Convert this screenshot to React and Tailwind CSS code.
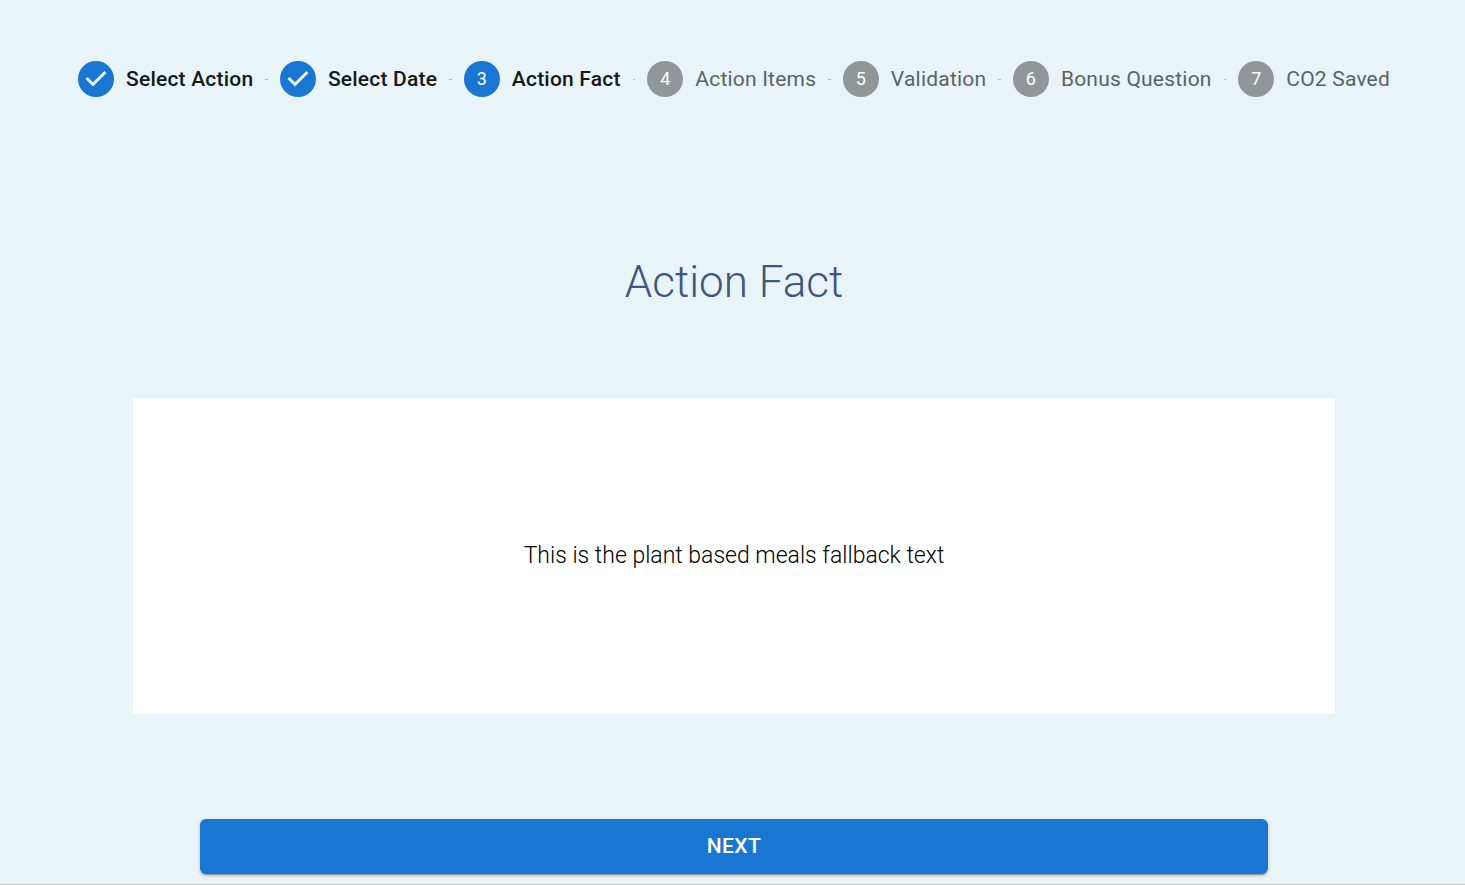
const steps = [
  { label: 'Select Action', state: 'done' },
  { label: 'Select Date', state: 'done' },
  { label: 'Action Fact', state: 'active' },
  { label: 'Action Items', state: 'todo' },
  { label: 'Validation', state: 'todo' },
  { label: 'Bonus Question', state: 'todo' },
  { label: 'CO2 Saved', state: 'todo' },
];

function StepIcon({ number, state }) {
  if (state === 'done') {
    return (
      <svg viewBox="0 0 24 24" className="size-9 shrink-0 fill-[#1976d2]" aria-hidden="true">
        <path d="M12 0a12 12 0 1 0 0 24 12 12 0 0 0 0-24zm-2 17l-5-5 1.4-1.4 3.6 3.6 7.6-7.6L19 8l-9 9z" />
      </svg>
    );
  }
  return (
    <span
      className={`flex size-9 shrink-0 items-center justify-center rounded-full text-lg text-white ${
        state === 'active' ? 'bg-[#1976d2]' : 'bg-[#919699]'
      }`}
    >
      {number}
    </span>
  );
}

function Stepper() {
  return (
    <ol className="flex w-full items-center justify-between px-[75px]">
      {steps.map((step, i) => (
        <li key={step.label} className={`flex items-center ${i < steps.length - 1 ? 'grow' : ''}`}>
          <StepIcon number={i + 1} state={step.state} />
          <span
            className={`ml-3 whitespace-nowrap text-[21px] leading-7 tracking-[0.01em] ${
              step.state === 'todo' ? 'text-[#5d6263]' : 'font-medium text-[#171818]'
            }`}
          >
            {step.label}
          </span>
          {i < steps.length - 1 && <span className="mx-3 h-px grow bg-[#bdbdbd]" />}
        </li>
      ))}
    </ol>
  );
}

export default function App() {
  return (
    <main className="flex min-h-screen flex-col items-center border-b border-[#bdbdbd] bg-[#e8f4f8] pt-[61px] pl-[3px] font-[Roboto,sans-serif]">
      <Stepper />
      <h1 className="mt-[158px] text-[44px] leading-[54px] font-light text-[#3f5680]">Action Fact</h1>
      <section className="mx-[130px] mt-[89px] flex min-h-[316px] items-center justify-center self-stretch bg-white">
        <p className="text-[23px] font-light text-black">This is the plant based meals fallback text</p>
      </section>
      <button
        type="button"
        className="mt-[105px] mb-[10px] h-[55px] w-[73%] rounded-md bg-[#1976d2] pb-0.5 text-[21px] leading-7 font-medium tracking-[0.02em] text-white uppercase shadow-[0_3px_1px_-2px_rgba(0,0,0,0.2),0_2px_2px_0_rgba(0,0,0,0.14),0_1px_5px_0_rgba(0,0,0,0.12)]"
      >
        Next
      </button>
    </main>
  );
}
